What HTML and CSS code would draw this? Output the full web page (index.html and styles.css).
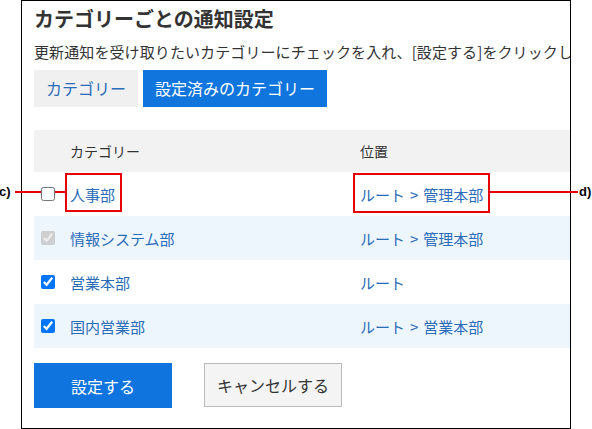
FILE: index.html
```html
<!DOCTYPE html>
<html lang="ja">
<head>
<meta charset="utf-8">
<title>カテゴリーごとの通知設定</title>
<link rel="stylesheet" href="styles.css">
</head>
<body>
<div class="frame">
  <h1 class="title">カテゴリーごとの通知設定</h1>
  <p class="desc">更新通知を受け取りたいカテゴリーにチェックを入れ、[設定する]をクリックします。</p>
  <div class="tabs">
    <span class="tab">カテゴリー</span>
    <span class="tab active">設定済みのカテゴリー</span>
  </div>
  <div class="table">
    <div class="row head">
      <div class="cell"></div>
      <div class="cell">カテゴリー</div>
      <div class="cell">位置</div>
    </div>
    <div class="row">
      <div class="cell"><input class="check" type="checkbox"></div>
      <div class="cell link">人事部</div>
      <div class="cell link">ルート<span class="sep">&gt;</span>管理本部</div>
    </div>
    <div class="row alt">
      <div class="cell"><input class="check" type="checkbox" checked disabled></div>
      <div class="cell link">情報システム部</div>
      <div class="cell link">ルート<span class="sep">&gt;</span>管理本部</div>
    </div>
    <div class="row">
      <div class="cell"><input class="check" type="checkbox" checked></div>
      <div class="cell link">営業本部</div>
      <div class="cell link">ルート</div>
    </div>
    <div class="row alt">
      <div class="cell"><input class="check" type="checkbox" checked></div>
      <div class="cell link">国内営業部</div>
      <div class="cell link">ルート<span class="sep">&gt;</span>営業本部</div>
    </div>
  </div>
  <div class="actions">
    <button class="btn primary" type="button">設定する</button>
    <button class="btn secondary" type="button">キャンセルする</button>
  </div>
</div>

<span class="note-label label-c">c)</span>
<span class="note-line line-c1"></span>
<span class="note-line line-c2"></span>
<span class="note-box box-c"></span>
<span class="note-box box-d"></span>
<span class="note-line line-d"></span>
<span class="note-label label-d">d)</span>
</body>
</html>
```
FILE: styles.css
```css
body {
  margin: 0;
  position: relative;
  width: 592px;
  height: 429px;
  overflow: hidden;
  background: #fff;
  font-family: "Noto Sans CJK JP", "Noto Sans", sans-serif;
  color: #333;
}

.frame {
  box-sizing: border-box;
  margin-left: 21px;
  width: 550px;
  height: 429px;
  border: 1px solid #000;
  padding: 4px 0 0 12px;
  overflow: hidden;
  background: #fff;
}

.title {
  margin: 0;
  font-size: 20px;
  line-height: 28px;
  font-weight: bold;
  color: #333;
}

.desc {
  margin: 8px 0 0;
  font-size: 15px;
  line-height: 22px;
  white-space: nowrap;
  letter-spacing: 0.1px;
  color: #333;
}

.tabs {
  display: flex;
  gap: 5px;
  margin-top: 7px;
}

.tab {
  height: 37px;
  line-height: 37px;
  padding: 0 12px;
  font-size: 16px;
  background: #f0f0f0;
  color: #2b6cb8;
}

.tab.active {
  background: #1075dd;
  color: #fff;
}

.table {
  margin-top: 23px;
  width: 545px;
}

.row {
  display: grid;
  grid-template-columns: 36px 290px 1fr;
  align-items: center;
  height: 44px;
  font-size: 15px;
  white-space: nowrap;
}

.row.head {
  height: 42px;
  background: #f2f2f2;
  font-size: 14px;
  color: #333;
}

.row.alt {
  background: #eef6fd;
}

.cell {
  display: flex;
  align-items: center;
}

.link {
  color: #2b6cb8;
}

.sep {
  margin: 0 5px;
}

.check {
  width: 14px;
  height: 14px;
  margin: 0 0 0 7px;
}

.actions {
  display: flex;
  align-items: flex-start;
  gap: 32px;
  margin-top: 15px;
}

.btn {
  box-sizing: border-box;
  width: 138px;
  height: 45px;
  padding: 0;
  font: inherit;
  font-size: 16px;
  border: 0;
  cursor: pointer;
}

.btn.primary {
  background: #0f74dd;
  color: #fff;
}

.btn.secondary {
  height: 44px;
  background: #f4f4f4;
  border: 1px solid #bbb;
  color: #333;
}

/* annotation overlay */
.note-label {
  position: absolute;
  top: 184px;
  font-family: "Liberation Sans", Arial, sans-serif;
  font-weight: bold;
  font-size: 13px;
  line-height: 16px;
  color: #000;
}

.label-c { left: -1px; }
.label-d { left: 579px; }

.note-line {
  position: absolute;
  top: 191px;
  height: 2px;
  background: #e60000;
}

.line-c1 { left: 15px; width: 26px; }
.line-c2 { left: 55px; width: 10px; }
.line-d { left: 489px; width: 89px; }

.note-box {
  position: absolute;
  box-sizing: border-box;
  border: 2px solid #e60000;
}

.box-c { left: 65px; top: 173px; width: 57px; height: 39px; }
.box-d { left: 353px; top: 173px; width: 137px; height: 40px; }
```
